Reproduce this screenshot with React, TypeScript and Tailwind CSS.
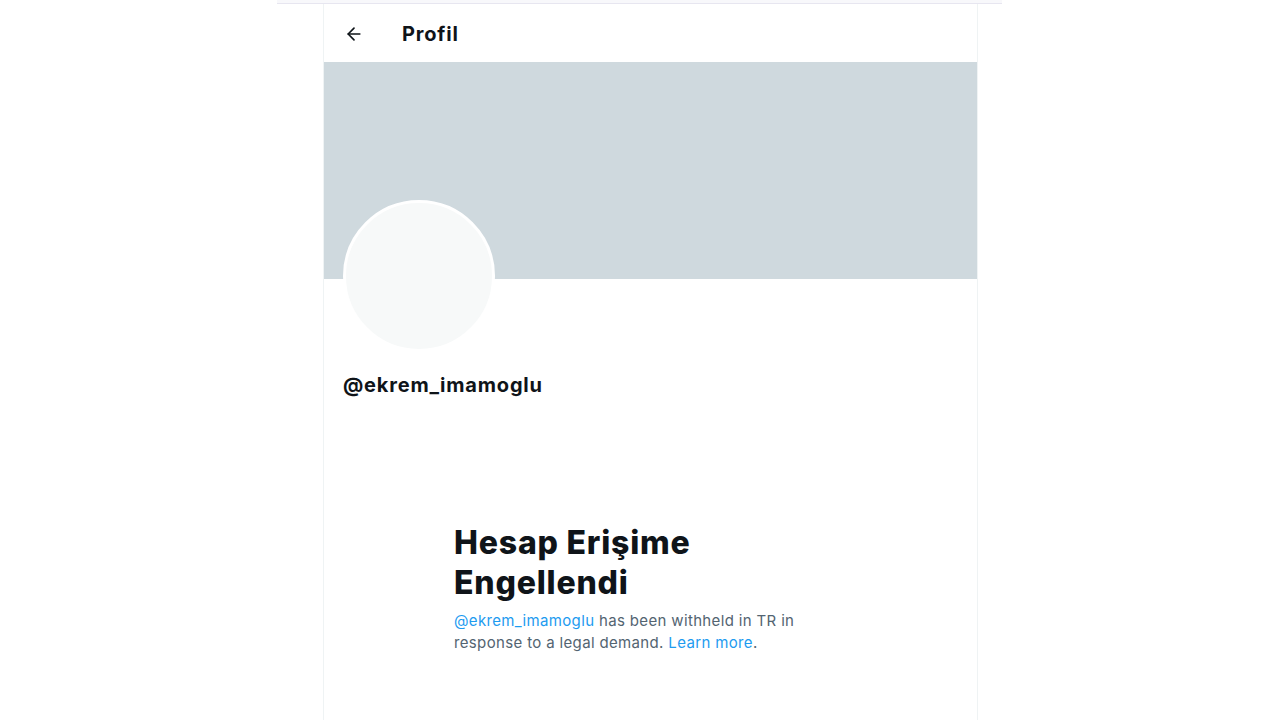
import { ArrowLeft } from "lucide-react";

export default function App() {
  return (
    <div className="min-h-screen bg-white" style={{ fontFamily: "Inter, 'Liberation Sans', sans-serif" }}>
      {/* top strip */}
      <div className="ml-[277px] w-[725px] h-[4px] bg-[#f8f8fb] border-b border-[#e7e6f0]" />

      <div className="ml-[323px] w-[655px] h-[716px] border-x border-[#eff3f4]">
        {/* header */}
        <div className="h-[58px] flex items-center px-[20px] pt-[1px]">
          <ArrowLeft className="w-[20px] h-[20px] text-[#0f1419]" strokeWidth={2} />
          <h2 className="ml-[38px] text-[20px] font-bold text-[#0f1419] tracking-[0.8px]">Profil</h2>
        </div>

        {/* banner */}
        <div className="h-[217px] bg-[#cfd9de]" />

        {/* avatar + name */}
        <div className="px-[19px]">
          <div className="-mt-[79px] w-[152px] h-[152px] rounded-full bg-[#f7f9f9] border-[3px] border-white" />
          <div className="mt-[21px] text-[20px] font-bold text-[#0f1419] leading-[24px] tracking-[0.8px]">
            @ekrem_imamoglu
          </div>
        </div>

        {/* withheld message */}
        <div className="ml-[130px] mt-[126px] w-[370px]">
          <h1 className="text-[32px] font-extrabold leading-[40px] text-[#0f1419] tracking-[0.8px]">
            Hesap Erişime
            <br />
            Engellendi
          </h1>
          <p className="mt-[7px] text-[15px] leading-[22px] text-[#536471] tracking-[0.35px]">
            <span className="text-[#1d9bf0]">@ekrem_imamoglu</span> has been withheld in TR in response to a legal
            demand. <span className="text-[#1d9bf0]">Learn more</span>.
          </p>
        </div>
      </div>
    </div>
  );
}
